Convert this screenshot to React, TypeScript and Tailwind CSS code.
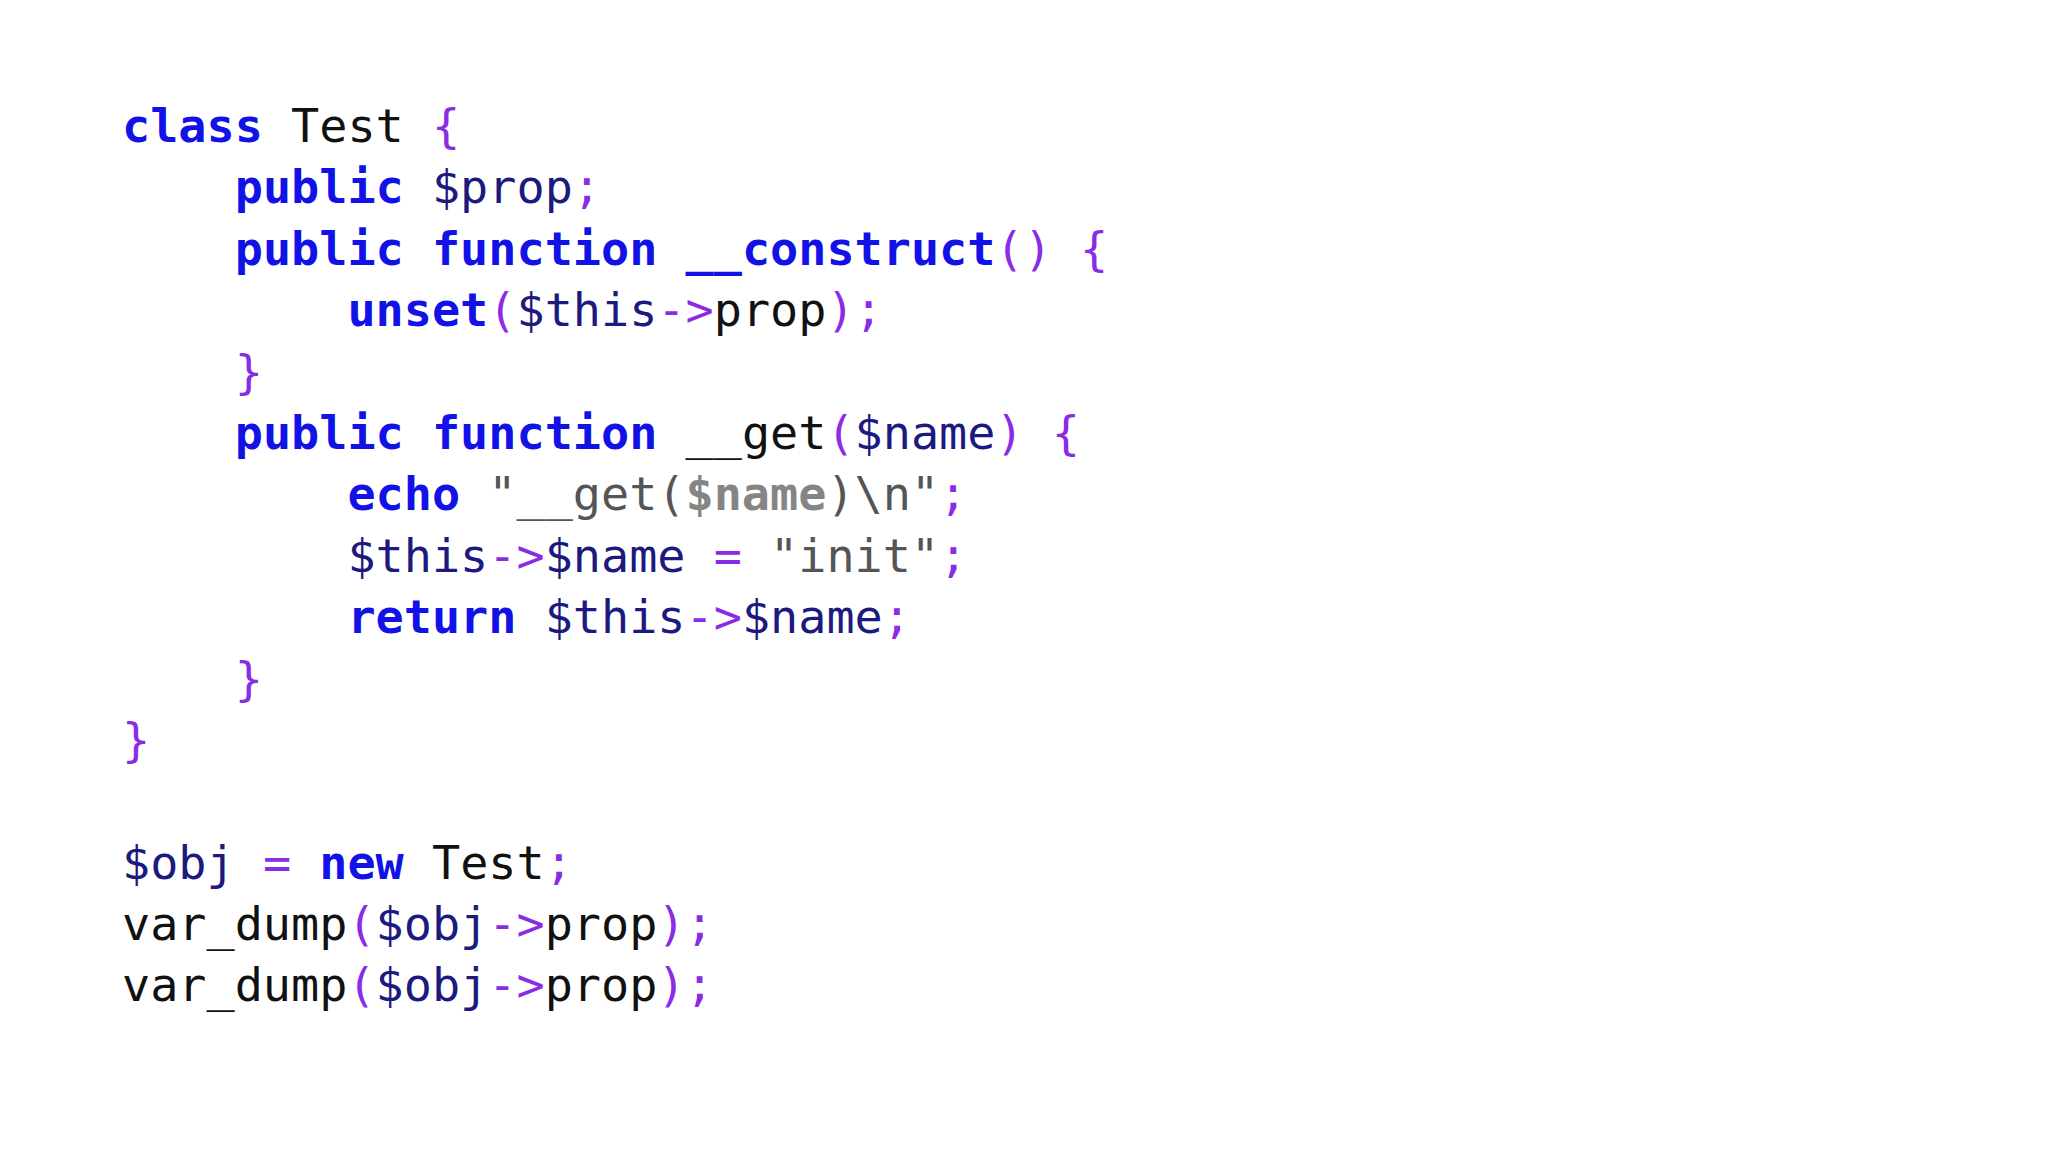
type Tok = [string, string];

const styles: Record<string, string> = {
    k: 'text-[#1212e6] font-bold',
    v: 'text-[#1c1a7e]',
    p: 'text-[#8a2be6]',
    t: 'text-[#111111]',
    s: 'text-[#555555]',
    sv: 'text-[#858585] font-bold',
    w: '',
};

const lines: Tok[][] = [
    [['k', 'class'], ['w', ' '], ['t', 'Test'], ['w', ' '], ['p', '{']],
    [['w', '    '], ['k', 'public'], ['w', ' '], ['v', '$prop'], ['p', ';']],
    [['w', '    '], ['k', 'public'], ['w', ' '], ['k', 'function'], ['w', ' '], ['k', '__construct'], ['p', '()'], ['w', ' '], ['p', '{']],
    [['w', '        '], ['k', 'unset'], ['p', '('], ['v', '$this'], ['p', '->'], ['t', 'prop'], ['p', ');']],
    [['w', '    '], ['p', '}']],
    [['w', '    '], ['k', 'public'], ['w', ' '], ['k', 'function'], ['w', ' '], ['t', '__get'], ['p', '('], ['v', '$name'], ['p', ')'], ['w', ' '], ['p', '{']],
    [['w', '        '], ['k', 'echo'], ['w', ' '], ['s', '"__get('], ['sv', '$name'], ['s', ')\\n"'], ['p', ';']],
    [['w', '        '], ['v', '$this'], ['p', '->'], ['v', '$name'], ['w', ' '], ['p', '='], ['w', ' '], ['s', '"init"'], ['p', ';']],
    [['w', '        '], ['k', 'return'], ['w', ' '], ['v', '$this'], ['p', '->'], ['v', '$name'], ['p', ';']],
    [['w', '    '], ['p', '}']],
    [['p', '}']],
    [],
    [['v', '$obj'], ['w', ' '], ['p', '='], ['w', ' '], ['k', 'new'], ['w', ' '], ['t', 'Test'], ['p', ';']],
    [['t', 'var_dump'], ['p', '('], ['v', '$obj'], ['p', '->'], ['t', 'prop'], ['p', ');']],
    [['t', 'var_dump'], ['p', '('], ['v', '$obj'], ['p', '->'], ['t', 'prop'], ['p', ');']],
];

export default function App() {
    return (
        <div className="w-[2048px] h-[1152px] bg-white overflow-hidden">
            <pre className="pl-[122px] pt-[96px] font-['DejaVu_Sans_Mono',monospace] text-[46.8px] leading-[61.4px]">
                {lines.map((line, i) => (
                    <div key={i} className="h-[61.4px] whitespace-pre">
                        {line.map(([kind, text], j) => (
                            <span key={j} className={styles[kind]}>
                                {text}
                            </span>
                        ))}
                    </div>
                ))}
            </pre>
        </div>
    );
}
